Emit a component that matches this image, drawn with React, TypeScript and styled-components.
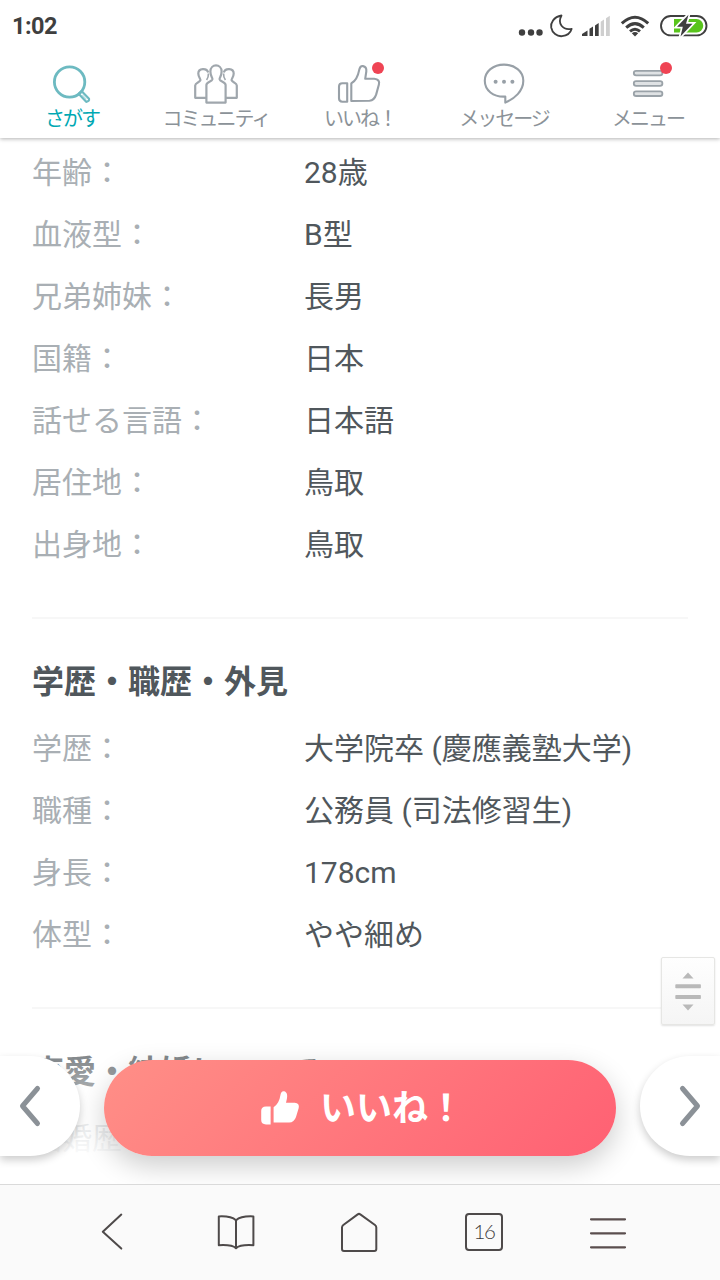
import React from "react";
import styled, { createGlobalStyle } from "styled-components";

const Global = createGlobalStyle`
  * { box-sizing: border-box; }
  html, body { margin: 0; padding: 0; background: #fff; }
  body { font-family: Roboto, "Noto Sans CJK JP", sans-serif; }
  svg { display: block; flex: none; }
`;

const Screen = styled.div`
  width: 720px;
  height: 1280px;
  display: flex;
  flex-direction: column;
  overflow: hidden;
  background: #fff;
`;

const StatusBar = styled.header`
  height: 50px;
  flex: none;
  display: flex;
  align-items: center;
  justify-content: space-between;
  padding: 2px 12px 0;
`;

const Clock = styled.span`
  font-size: 23.5px;
  line-height: 28px;
  letter-spacing: -0.5px;
  font-weight: 700;
  color: #3f3f3f;
`;

const TabBar = styled.nav`
  height: 88px;
  flex: none;
  display: grid;
  grid-template-columns: repeat(5, 1fr);
  background: #fff;
  box-shadow: 0 1px 4px rgba(0, 0, 0, 0.3);
  clip-path: inset(0 0 -8px 0);
  z-index: 1;
`;

const Tab = styled.a<{ $active?: boolean }>`
  display: flex;
  flex-direction: column;
  align-items: center;
  padding-top: 10px;
  color: ${(p) => (p.$active ? "#00a8b3" : "#8b9298")};
`;

const TabLabel = styled.span`
  margin-top: 1px;
  font-size: 20px;
  line-height: 24px;
  letter-spacing: -2px;
  white-space: nowrap;
`;

const Main = styled.main`
  position: relative;
  flex: 1;
  min-height: 0;
  overflow: hidden;
`;

const Section = styled.section<{ $first?: boolean }>`
  margin: 0 32px;
  padding: ${(p) => (p.$first ? "4px 0 41px" : "0 0 41px")};
  border-bottom: 2px solid #f7f7f7;
`;

const Heading = styled.h2`
  margin: 0;
  padding: 39px 0 12px;
  font-size: 32px;
  line-height: 48px;
  font-weight: 700;
  color: #50575c;
`;

const Row = styled.div`
  display: grid;
  grid-template-columns: 272px 1fr;
  height: 62px;
  align-items: center;
  font-size: 30px;
  line-height: 44px;
  white-space: nowrap;
`;

const Term = styled.span`
  color: #a9afb4;
`;

const Value = styled.span`
  color: #50575c;
`;

const Fade = styled.div`
  position: absolute;
  left: 0;
  right: 0;
  bottom: 0;
  height: 172px;
  background: linear-gradient(rgba(255, 255, 255, 0), rgba(255, 255, 255, 0.97) 86%);
`;

const ScrollHandle = styled.div`
  position: absolute;
  right: 5px;
  bottom: 159px;
  width: 54px;
  height: 68px;
  border: 1px solid #e6e6e4;
  border-radius: 2px;
  background: linear-gradient(#fefefe, #f5f5f5);
  box-shadow: 0 1px 2px rgba(0, 0, 0, 0.12);
`;

const SideButton = styled.button<{ $side: "left" | "right" }>`
  position: absolute;
  ${(p) => p.$side}: 0;
  bottom: 28px;
  width: 80px;
  height: 100px;
  padding: 0;
  border: 0;
  border-radius: ${(p) => (p.$side === "left" ? "0 50px 50px 0" : "50px 0 0 50px")};
  background: #fff;
  box-shadow: 0 4px 8px rgba(0, 0, 0, 0.2);
`;

const LikeButton = styled.button`
  position: absolute;
  left: 104px;
  bottom: 28px;
  width: 512px;
  height: 96px;
  display: flex;
  align-items: center;
  gap: 20px;
  padding: 0 0 0 156px;
  border: 0;
  border-radius: 48px;
  background: linear-gradient(135deg, #ff8f87, #ff6073);
  box-shadow: 0 10px 28px rgba(0, 0, 0, 0.2);
  color: #fff;
  font-family: inherit;
  font-size: 36px;
  line-height: 52px;
  font-weight: 700;
`;

const LikeLabel = styled.span`
  padding-top: 2px;
`;

const BrowserBar = styled.footer`
  height: 96px;
  flex: none;
  display: grid;
  grid-template-columns: repeat(5, 124px);
  justify-content: center;
  justify-items: center;
  align-items: center;
  padding-bottom: 2px;
  border-top: 1px solid #dadada;
  background: #fafafa;
  z-index: 1;
`;

const TabCount = styled.span`
  width: 38px;
  height: 38px;
  border: 2px solid #4e4a4a;
  border-radius: 4px;
  display: flex;
  justify-content: center;
  font-family: Lato, sans-serif;
  font-weight: 300;
  font-size: 20.5px;
  line-height: 33px;
  letter-spacing: -1.5px;
  color: #3e3a3a;
`;

const StatusIcons = () => (
  <svg width="190" height="26" viewBox="518 12 190 26" fill="none">
    <g fill="#3f3f3f">
      <circle cx="522" cy="31.5" r="3.2" />
      <circle cx="531" cy="31.5" r="3.2" />
      <circle cx="539.5" cy="31.5" r="3.2" />
    </g>
    <path d="M561.5 14.5C553.5 16 550.5 22 551.2 26.5C552.2 32 557 35.6 562 35.2C567 34.8 570.5 32 571.7 27.8C562.5 29.5 557.2 22.5 561.5 14.5Z" stroke="#3f3f3f" strokeWidth="1.8" strokeLinejoin="round" />
    <g fill="#3f3f3f">
      <path d="M582 35V33L587.5 29.5V35Z" />
      <path d="M589.5 35V27.7L593 25.5V35Z" />
      <path d="M595 35V24.5L598.7 22V35Z" />
    </g>
    <g fill="#cfcfcf">
      <path d="M600.7 35V20.7L604 18.5V35Z" />
      <path d="M606 35V17.2L609.8 14.8V35Z" />
    </g>
    <g stroke="#3f3f3f" strokeWidth="3">
      <path d="M621.8 22.4Q635 10.2 648.2 22.4" />
      <path d="M626.2 26.6Q635 18.6 643.8 26.6" />
      <path d="M630 30.4Q635 26.2 640 30.4" />
    </g>
    <path d="M631.8 32.2Q635 29.8 638.2 32.2L635 35.4Z" fill="#3f3f3f" />
    <rect x="661" y="15" width="45.5" height="19.4" rx="9.7" stroke="#3f3f3f" strokeWidth="1.9" />
    <path d="M674 18H696.5A6.7 6.7 0 0 1 696.5 31.5H674Z" fill="#59c41c" />
    <path d="M688.5 13.8L677 25.8H682.8L680.5 35.5L692.5 22.8H686Z" fill="#3f3f3f" stroke="#fff" strokeWidth="3.4" paintOrder="stroke" />
  </svg>
);

const SearchIcon = () => (
  <svg width="48" height="46" viewBox="48 60 48 46" fill="none" stroke="#6dbac1">
    <circle cx="69.6" cy="82" r="15.2" strokeWidth="2.8" />
    <path d="M78.6 93.8L81.5 91L89 98.8Q89.6 101.4 86.2 101.8Z" strokeWidth="2.2" strokeLinejoin="round" />
    <path d="M82.3 95L86.4 99.3" strokeWidth="1.2" strokeOpacity="0.45" />
  </svg>
);

const CommunityIcon = () => (
  <svg width="48" height="46" viewBox="192 60 48 46" fill="none" stroke="#a0a7ad" strokeWidth="2.2" strokeLinejoin="round">
    <path d="M206.5 97.8H195.2V85.5C195.2 82.6 199.4 82.6 200.4 80.3C200.9 79 198.3 77.4 198.3 73.6C198.3 67.8 207 67.8 208.2 72.6" />
    <path d="M225.5 97.8H236.8V85.5C236.8 82.6 232.6 82.6 231.6 80.3C231.1 79 233.7 77.4 233.7 73.6C233.7 67.8 225 67.8 223.8 72.6" />
    <path d="M206.4 102.6V85C206.4 81.9 211.8 81.8 212.4 79.2C212.7 77.7 210.4 76.2 210.4 71.5C210.4 63.4 221.6 63.4 221.6 71.5C221.6 76.2 219.3 77.7 219.6 79.2C220.2 81.8 225.6 81.9 225.6 85V102.6Z" />
    <path d="M208.4 73.5Q208.6 77.4 206.6 80M223.6 73.5Q223.4 77.4 225.4 80" strokeWidth="1.6" />
  </svg>
);

const LikeTabIcon = () => (
  <svg width="48" height="46" viewBox="336 60 48 46" fill="none" stroke="#98a0a7" strokeWidth="2.1" strokeLinejoin="round">
    <path d="M347.2 83.2V101.7H342.4Q339 101.7 339 98.3V86.6Q339 83.2 342.4 83.2Z" />
    <path d="M351.3 101V83.4Q354.6 81.2 356.2 78.4Q358.3 74.8 359.3 69.6Q360.2 65.7 363 66.1Q366.8 66.8 366.3 71.5L365.2 78.8H374.2Q380.2 79.4 378.9 84.5L376.2 94.4Q374.3 100.4 369.5 100.8Z" />
    <circle cx="378" cy="68" r="6" fill="#ef4454" stroke="none" />
  </svg>
);

const MessageIcon = () => (
  <svg width="48" height="46" viewBox="480 60 48 46" fill="none" stroke="#98a0a7" strokeWidth="2.1" strokeLinejoin="round">
    <path d="M505.3 102.6V96.6C493 97.2 484.8 90.2 484.8 80.8C484.8 71.3 493.3 64.6 504 64.6C514.7 64.6 523.3 71.3 523.3 80.8C523.3 91.2 514.5 98.7 505.3 102.6Z" />
    <g fill="#98a0a7" stroke="none">
      <circle cx="495.6" cy="81.8" r="2" />
      <circle cx="504" cy="81.8" r="2" />
      <circle cx="512.4" cy="81.8" r="2" />
    </g>
  </svg>
);

const MenuIcon = () => (
  <svg width="48" height="46" viewBox="624 60 48 46" fill="#dfe2e4" stroke="#9aa2a8" strokeWidth="1.8">
    <rect x="633.8" y="70.8" width="28.6" height="4.6" rx="2.3" />
    <rect x="633.8" y="81.2" width="28.6" height="4.6" rx="2.3" />
    <rect x="633.8" y="91.4" width="28.6" height="4.6" rx="2.3" />
    <circle cx="666" cy="68" r="6" fill="#ef4454" stroke="none" />
  </svg>
);

const LikeIcon = () => (
  <svg width="40" height="36" viewBox="0 0 40 36" fill="#fff">
    <path d="M10.6 16.4V34.4H6Q1.2 34.4 1.2 30V21Q1.2 16.4 6 16.4Z" />
    <path d="M13.6 32.5V17.2C17.5 14.8 19.6 10.5 20.4 5.3C20.9 1.8 22.2 0.9 24 1.2C27 1.8 27.7 5.1 26.9 8.7L26 12.7H34.7Q39.8 13.1 38.7 18.1L36 26.9Q34.1 32.2 29.2 32.5Z" />
  </svg>
);

const Chevron = ({ points }: { points: string }) => (
  <svg width="80" height="100" viewBox="0 0 80 100" fill="none">
    <polyline points={points} stroke="#8b9197" strokeWidth="5" strokeLinecap="round" strokeLinejoin="round" />
  </svg>
);

const HandleIcon = () => (
  <svg width="52" height="66" viewBox="662 958 52 66">
    <g fill="#b9b9b9">
      <path d="M688 972.5L693.5 978.5H682.5Z" />
      <rect x="675.3" y="984.3" width="25.6" height="4" rx="0.8" />
      <rect x="675.3" y="995" width="25.6" height="4" rx="0.8" />
      <path d="M688 1010.5L693.5 1004.5H682.5Z" />
    </g>
  </svg>
);

const tabs = [
  { label: "さがす", Icon: SearchIcon, active: true },
  { label: "コミュニティ", Icon: CommunityIcon },
  { label: "いいね！", Icon: LikeTabIcon },
  { label: "メッセージ", Icon: MessageIcon },
  { label: "メニュー", Icon: MenuIcon },
];

const basics = [
  ["年齢", "28歳"],
  ["血液型", "B型"],
  ["兄弟姉妹", "長男"],
  ["国籍", "日本"],
  ["話せる言語", "日本語"],
  ["居住地", "鳥取"],
  ["出身地", "鳥取"],
];

const career = [
  ["学歴", "大学院卒 (慶應義塾大学)"],
  ["職種", "公務員 (司法修習生)"],
  ["身長", "178cm"],
  ["体型", "やや細め"],
];

const romance = [["結婚歴", ""]];

const Rows = ({ items }: { items: string[][] }) => (
  <>
    {items.map(([term, value]) => (
      <Row key={term}>
        <Term>{term}：</Term>
        <Value>{value}</Value>
      </Row>
    ))}
  </>
);

export default function App() {
  return (
    <Screen lang="ja">
      <Global />
      <StatusBar>
        <Clock>1:02</Clock>
        <StatusIcons />
      </StatusBar>
      <TabBar>
        {tabs.map(({ label, Icon, active }) => (
          <Tab key={label} $active={active}>
            <Icon />
            <TabLabel>{label}</TabLabel>
          </Tab>
        ))}
      </TabBar>
      <Main>
        <Section $first>
          <Rows items={basics} />
        </Section>
        <Section>
          <Heading>学歴・職歴・外見</Heading>
          <Rows items={career} />
        </Section>
        <Section>
          <Heading>恋愛・結婚について</Heading>
          <Rows items={romance} />
        </Section>
        <Fade />
        <ScrollHandle>
          <HandleIcon />
        </ScrollHandle>
        <LikeButton>
          <LikeIcon />
          <LikeLabel>いいね！</LikeLabel>
        </LikeButton>
        <SideButton $side="left" aria-label="前へ">
          <Chevron points="37.5,32.5 22.5,50 37.5,67.5" />
        </SideButton>
        <SideButton $side="right" aria-label="次へ">
          <Chevron points="42.5,32.5 57.5,50 42.5,67.5" />
        </SideButton>
      </Main>
      <BrowserBar>
        <svg width="40" height="40" viewBox="92 1212 40 40" fill="none" stroke="#4e4a4a" strokeWidth="2" strokeLinecap="round" strokeLinejoin="round">
          <path d="M121.3 1214.6L102.8 1231.7L121.3 1248.6" />
        </svg>
        <svg width="40" height="40" viewBox="216 1212 40 40" fill="none" stroke="#4e4a4a" strokeWidth="2" strokeLinejoin="round">
          <path d="M236 1220.2Q231 1215.8 218.8 1216.4V1245.2Q232 1244.4 236 1248.2Q240 1244.4 253.4 1245.2V1216.4Q241 1215.8 236 1220.2V1248.2" />
        </svg>
        <svg width="40" height="40" viewBox="340 1212 40 40" fill="none" stroke="#4e4a4a" strokeWidth="2" strokeLinejoin="round">
          <path d="M357.7 1214.4Q359 1213.4 360.3 1214.4L375 1225Q376.3 1226 376.3 1227.6V1249Q376.3 1251 374.3 1251H344Q342 1251 342 1249V1227.6Q342 1226 343.3 1225Z" />
        </svg>
        <TabCount>16</TabCount>
        <svg width="40" height="40" viewBox="588 1212 40 40" fill="none" stroke="#5a4e4e" strokeWidth="2.2" strokeLinecap="round">
          <path d="M591 1219.3H625M591 1233.3H625M591 1247.3H625" />
        </svg>
      </BrowserBar>
    </Screen>
  );
}
